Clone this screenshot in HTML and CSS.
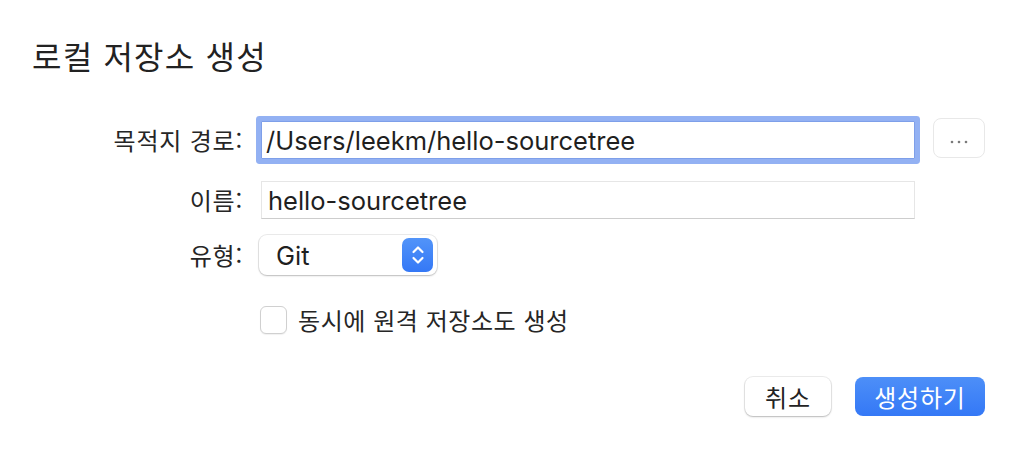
FILE: index.html
```html
<!DOCTYPE html>
<html lang="ko">
<head>
<meta charset="utf-8">
<link rel="stylesheet" href="styles.css">
</head>
<body>
<div class="dialog">
  <h1 class="title">로컬 저장소 생성</h1>
  <div class="row row-path">
    <label class="label">목적지 경로:</label>
    <div class="input focused">/Users/leekm/hello-sourcetree</div>
    <button class="browse">
      <svg class="dots" width="20" height="4" viewBox="0 0 20 4"><circle cx="3" cy="2" r="1.3" fill="#7a7a7a"/><circle cx="10" cy="2" r="1.3" fill="#7a7a7a"/><circle cx="17" cy="2" r="1.3" fill="#7a7a7a"/></svg>
    </button>
  </div>
  <div class="row row-name">
    <label class="label">이름:</label>
    <div class="input plain">hello-sourcetree</div>
  </div>
  <div class="row row-type">
    <label class="label">유형:</label>
    <div class="select">
      <span class="select-text">Git</span>
      <span class="stepper">
        <svg width="16" height="26" viewBox="0 0 16 26"><path d="M3.5 10 L8 5.5 L12.5 10" fill="none" stroke="#fff" stroke-width="2.2" stroke-linecap="round" stroke-linejoin="round"/><path d="M3.5 16 L8 20.5 L12.5 16" fill="none" stroke="#fff" stroke-width="2.2" stroke-linecap="round" stroke-linejoin="round"/></svg>
      </span>
    </div>
  </div>
  <div class="row row-check">
    <span class="label"></span>
    <span class="checkbox"></span>
    <span class="check-label">동시에 원격 저장소도 생성</span>
  </div>
  <div class="actions">
    <button class="btn cancel">취소</button>
    <button class="btn primary">생성하기</button>
  </div>
</div>
</body>
</html>
```

FILE: styles.css
```css
* { box-sizing: border-box; }
html, body { margin: 0; padding: 0; background: #ffffff; }
body {
  width: 1016px;
  height: 450px;
  overflow: hidden;
  font-family: "Inter", "Noto Sans CJK KR", sans-serif;
  color: #262626;
}
.dialog {
  padding: 35px 31px 0 32px;
}
.title {
  margin: 0;
  font-family: "Noto Sans CJK KR", sans-serif;
  font-weight: 400;
  font-size: 32px;
  letter-spacing: 1.2px;
  line-height: 40px;
  color: #222222;
}
.row {
  display: flex;
  align-items: center;
}
.row-path { margin-top: 43px; }
.row-name { margin-top: 19px; }
.row-type { margin-top: 16px; }
.row-check { margin-top: 30px; }
.label {
  flex: 0 0 211px;
  margin-right: 18px;
  font-family: "Noto Sans CJK KR", sans-serif;
  font-size: 24px;
  letter-spacing: 0.8px;
  line-height: 30px;
  text-align: right;
  color: #262626;
}
.input {
  width: 654px;
  height: 38px;
  font-size: 25.5px;
  color: #1f1f1f;
  display: flex;
  align-items: center;
  background: #fff;
}
.input.focused {
  border: 1px solid #7e9fe9;
  border-radius: 1px;
  box-shadow: 0 0 0 5px #93b1f3;
  padding-left: 4px;
}
.browse {
  width: 52px;
  height: 40px;
  margin-left: 18px;
  margin-bottom: 4px;
  border: 1px solid #e8e8e8;
  border-radius: 8px;
  background: #fff;
  display: flex;
  align-items: center;
  justify-content: center;
  padding: 0;
}
.dots { margin-top: 7px; }
.input.plain {
  border: 1px solid #e6e6e6;
  border-bottom-color: #cdcdcd;
  padding-left: 6px;
}
.select {
  width: 178px;
  height: 40px;
  margin-left: -2px;
  border-radius: 8px;
  background: #fff;
  box-shadow: 0 0 0 1px rgba(0,0,0,0.08), 0 1px 2px rgba(0,0,0,0.2);
  display: flex;
  align-items: center;
  justify-content: space-between;
  padding: 0 4px 0 17px;
}
.select-text {
  font-size: 25.5px;
  color: #1f1f1f;
}
.stepper {
  width: 31px;
  height: 34px;
  border-radius: 7px;
  background: linear-gradient(#5294f9, #3478f6);
  display: flex;
  align-items: center;
  justify-content: center;
}
.checkbox {
  flex: 0 0 27px;
  height: 28px;
  margin-left: -1px;
  border-radius: 6px;
  border: 1px solid #d0d0d0;
  background: #fff;
  box-shadow: 0 1px 1px rgba(0,0,0,0.06);
}
.check-label {
  margin-left: 11px;
  font-family: "Noto Sans CJK KR", sans-serif;
  font-size: 24px;
  letter-spacing: 0.55px;
  line-height: 30px;
  color: #262626;
}
.actions {
  margin-top: 42px;
  display: flex;
  justify-content: flex-end;
  gap: 24px;
}
.btn {
  height: 39px;
  border-radius: 8px;
  font-family: "Noto Sans CJK KR", sans-serif;
  font-size: 24px;
  letter-spacing: 0.8px;
  border: none;
  padding: 0;
}
.btn.cancel {
  width: 86px;
  background: #fff;
  color: #232323;
  box-shadow: 0 0 0 1px rgba(0,0,0,0.07), 0 1px 2px rgba(0,0,0,0.22);
}
.btn.primary {
  width: 130px;
  background: linear-gradient(#4d8ff8, #3478f6);
  color: #fff;
}
```
